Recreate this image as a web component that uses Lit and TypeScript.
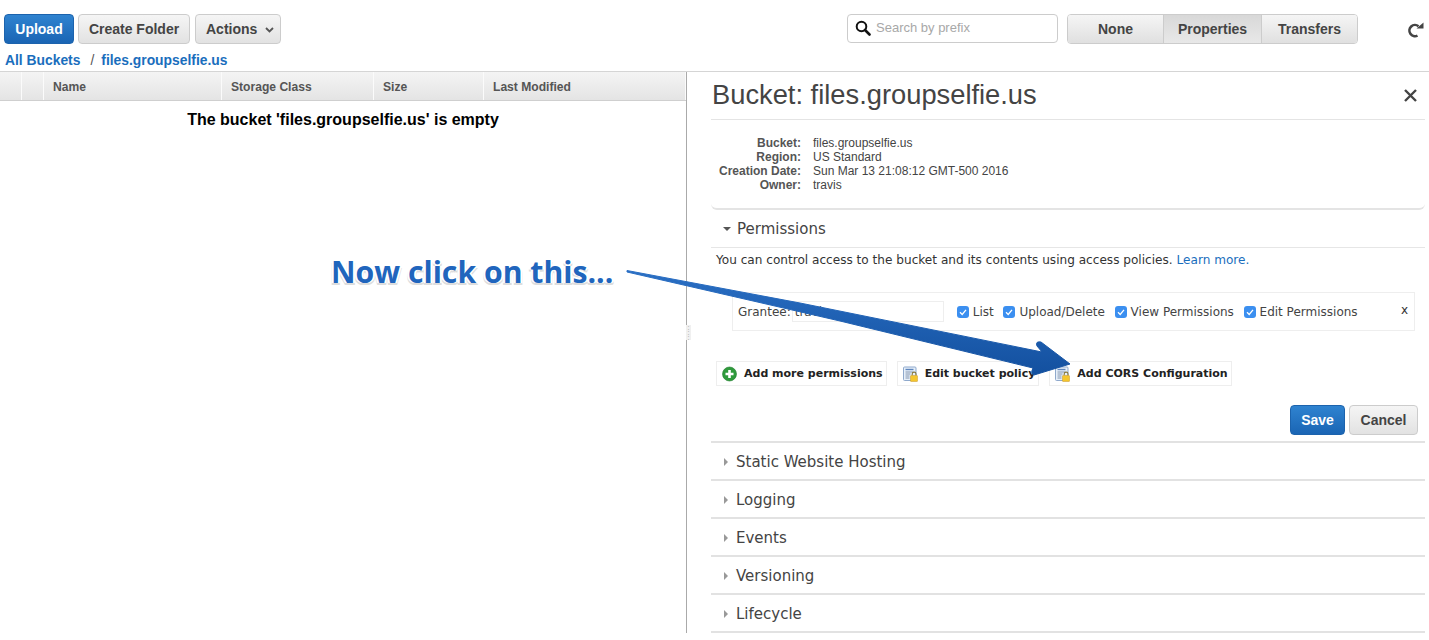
import { LitElement, css, html, svg } from 'lit'
import { customElement } from 'lit/decorators.js'

const sections = ['Static Website Hosting', 'Logging', 'Events', 'Versioning', 'Lifecycle']
const perms = ['List', 'Upload/Delete', 'View Permissions', 'Edit Permissions']
const columns = ['', '', 'Name', 'Storage Class', 'Size', 'Last Modified']
const details = [
  ['Bucket:', 'files.groupselfie.us'],
  ['Region:', 'US Standard'],
  ['Creation Date:', 'Sun Mar 13 21:08:12 GMT-500 2016'],
  ['Owner:', 'travis'],
]

const policyIcon = svg`<svg class="ico" width="16" height="16" viewBox="0 0 16 16">
  <rect x=".5" y="1" width="12.5" height="13.5" rx="1" fill="#e6eff9" stroke="#8fa9cc"/>
  <path d="M2.5 3.5h8" stroke="#5f86bd" stroke-width="1.4"/>
  <path d="M2.5 6h8M2.5 8h5M2.5 10h4M2.5 12h4" stroke="#8496b0" stroke-width="1"/>
  <path d="M9.2 9.5V8a1.9 1.9 0 0 1 3.8 0v1.5" fill="none" stroke="#8a7a3c" stroke-width="1.1"/>
  <rect x="7.5" y="9.5" width="7" height="6" rx=".6" fill="#f4c62e" stroke="#c9982a" stroke-width=".5"/>
</svg>`

const addIcon = svg`<svg class="ico" width="16" height="16" viewBox="0 0 16 16">
  <circle cx="7.5" cy="8" r="7" fill="#2f9a3c" stroke="#1f7d2c" stroke-width=".6"/>
  <path d="M7.5 4v8M3.5 8h8" stroke="#fff" stroke-width="2.6"/>
</svg>`

@customElement('app-root')
export class AppRoot extends LitElement {
  static override styles = css`
    :host {
      display: block;
      position: relative;
      width: 1429px;
      height: 640px;
      overflow: hidden;
      background: #fff;
      font-family: 'Liberation Sans', Arial, sans-serif;
      color: #444;
    }

    .top {
      height: 72px;
      box-sizing: border-box;
      border-bottom: 1px solid #d5d5d5;
      padding: 14px 0 0 4px;
    }

    .toolbar {
      display: flex;
      align-items: flex-start;
      height: 30px;
    }

    .btn {
      box-sizing: border-box;
      height: 30px;
      display: flex;
      align-items: center;
      justify-content: center;
      border: 1px solid #ccc;
      border-radius: 4px;
      background: linear-gradient(#f5f5f5, #e2e2e2);
      font-family: 'Liberation Sans', Arial, sans-serif;
      font-size: 14px;
      font-weight: 700;
      color: #444;
      margin-right: 5px;
    }

    .btn.primary {
      background: linear-gradient(#2f83d0, #1a65b4);
      border-color: #1c63ad;
      color: #fff;
    }

    .upload { width: 70px; margin-right: 4px; }
    .create { width: 112px; }
    .actions { width: 86px; gap: 8px; justify-content: flex-start; padding-left: 10px; }
    .actions svg { margin-top: 1px; }

    .search {
      box-sizing: border-box;
      width: 211px;
      height: 29px;
      margin-left: 561px;
      border: 1px solid #ccc;
      border-radius: 4px;
      display: flex;
      align-items: center;
      gap: 5px;
      padding: 0 0 2px 7px;
      font-size: 13px;
      color: #a8a8a8;
    }

    .tabs {
      display: flex;
      box-sizing: border-box;
      width: 291px;
      height: 30px;
      margin-left: 9px;
      border: 1px solid #ccc;
      border-radius: 4px;
      overflow: hidden;
    }

    .tab {
      display: flex;
      align-items: center;
      justify-content: center;
      background: linear-gradient(#f5f5f5, #e0e0e0);
      font-size: 14px;
      font-weight: 700;
      color: #444;
      box-sizing: border-box;
    }

    .tab + .tab { border-left: 1px solid #ccc; }
    .tab.none { width: 95px; }
    .tab.props { width: 98px; background: linear-gradient(#d8d8d8, #e8e8e8); }
    .tab.transfers { flex: 1; }

    .reload { margin-left: 49px; margin-top: 7px; }

    .crumbs {
      display: flex;
      margin-top: 8px;
      padding-left: 1px;
      font-size: 13.85px;
      line-height: 16px;
      font-weight: 700;
      color: #1a6ebd;
    }

    .crumbs .sep {
      font-weight: 400;
      color: #555;
      margin: 0 7px 0 10px;
    }

    .main {
      display: flex;
      height: 561px;
    }

    .left {
      box-sizing: border-box;
      width: 687px;
      border-right: 1px solid #aaa;
      height: 561px;
      flex: none;
    }

    .thead {
      display: grid;
      grid-template-columns: 22px 22px 178px 152px 110px 1fr;
      height: 29px;
      background: linear-gradient(#f4f4f4, #e4e4e4);
      border-bottom: 1px solid #cfcfcf;
      box-sizing: border-box;
    }

    .thead div {
      display: flex;
      align-items: center;
      padding: 2px 0 0 9px;
      border-right: 1px solid #fbfbfb;
      font-size: 12.1px;
      font-weight: 700;
      color: #555;
    }

    .empty {
      text-align: center;
      font-size: 16px;
      font-weight: 700;
      color: #000;
      margin-top: 10px;
      line-height: 18px;
    }

    .right {
      flex: 1;
      padding: 0 4px 0 24px;
      min-width: 0;
    }

    .title {
      box-sizing: border-box;
      display: flex;
      justify-content: space-between;
      align-items: center;
      height: 47px;
      font-size: 27.3px;
      color: #444;
      padding: 0 7px 2px 1px;
    }

    .title svg { margin-top: 2px; }

    .info {
      box-sizing: border-box;
      height: 91px;
      padding-top: 16px;
      border-top: 1px solid #e4e4e4;
      border-bottom: 2px solid #e4e4e4;
      border-radius: 0 0 6px 6px;
      display: grid;
      grid-template-columns: 90px 1fr;
      column-gap: 12px;
      font-size: 12px;
      line-height: 14px;
      align-content: start;
    }

    .info b { text-align: right; color: #555; }

    .section {
      font-family: 'DejaVu Sans', Verdana, sans-serif;
      font-size: 15px;
      color: #444;
      display: flex;
      align-items: center;
      gap: 8px;
      padding: 2px 0 0 13px;
      height: 34px;
      border-bottom: 2px solid #e2e2e2;
    }

    .section.perm-head {
      height: 37px;
      padding: 0 0 0 12px;
      gap: 6px;
      border-bottom: 1px solid #e6e6e6;
    }

    .arrow-r {
      width: 0;
      height: 0;
      border-left: 4px solid #999;
      border-top: 4px solid transparent;
      border-bottom: 4px solid transparent;
    }

    .arrow-d {
      width: 0;
      height: 0;
      border-top: 4px solid #555;
      border-left: 4px solid transparent;
      border-right: 4px solid transparent;
    }

    .perm-body {
      font-family: 'DejaVu Sans', Verdana, sans-serif;
      font-size: 12px;
      height: 195px;
      box-sizing: border-box;
      border-bottom: 2px solid #e2e2e2;
    }

    .intro {
      padding: 5px 0 0 5px;
      font-size: 12.1px;
      line-height: 15px;
      color: #333;
    }

    .intro span { color: #1a6ebd; }

    .grantee {
      box-sizing: border-box;
      height: 39px;
      margin: 24px 10px 0 21px;
      border: 1px solid #eee;
      display: flex;
      align-items: center;
      padding: 0 6px 0 5px;
    }

    .field {
      box-sizing: border-box;
      width: 152px;
      height: 21px;
      margin: 0 13px 0 1px;
      border: 1px solid #eee;
      display: flex;
      align-items: center;
      padding-left: 2px;
    }

    .perm {
      display: flex;
      align-items: center;
      gap: 4px;
      margin-right: 9.7px;
    }

    .check {
      width: 12px;
      height: 12px;
      border-radius: 3px;
      background: #3b8ff0;
      display: block;
    }

    .close-x {
      margin-left: auto;
      margin-top: -3px;
      font-size: 12px;
      color: #333;
    }

    .actions-row {
      display: flex;
      margin: 30px 0 0 5px;
      gap: 10px;
    }

    .link {
      box-sizing: border-box;
      height: 25px;
      display: flex;
      align-items: center;
      gap: 6px;
      padding: 0 3px 0 5px;
      border: 1px solid #eee;
      font-size: 11px;
      font-weight: 700;
      color: #222;
    }

    .ico { flex: none; }

    .save-row {
      display: flex;
      justify-content: flex-end;
      gap: 4px;
      margin-top: 19px;
      padding-right: 7px;
    }

    .save-row .btn { margin: 0; }
    .save { width: 55px; }
    .cancel { width: 69px; }

    .handle {
      position: absolute;
      left: 686px;
      top: 325px;
      width: 5px;
      height: 15px;
      background: #f0f0f0;
      color: #999;
      font-size: 7px;
      line-height: 5px;
      text-align: center;
    }

    .note {
      position: absolute;
      left: 331px;
      top: 250px;
      font-family: 'Open Sans', sans-serif;
      font-size: 30.2px;
      line-height: 43px;
      font-weight: 700;
      color: #2065bd;
      text-shadow: -2px 0 0 #fff, 2px 0 0 #fff, 0 -2px 0 #fff, 0 2px 0 #ddd, 2px 2px 0 #ddd, -2px 2px 0 #ddd;
      white-space: nowrap;
    }

    .pointer {
      position: absolute;
      left: 0;
      top: 0;
      pointer-events: none;
    }
  `

  override render() {
    return html`
      <div class="top">
        <div class="toolbar">
          <div class="btn primary upload">Upload</div>
          <div class="btn create">Create Folder</div>
          <div class="btn actions">
            Actions
            <svg width="9" height="6" viewBox="0 0 9 6"><path d="M1 1l3.5 3.5L8 1" fill="none" stroke="#555" stroke-width="1.8"/></svg>
          </div>
          <div class="search">
            <svg width="16" height="16" viewBox="0 0 16 16"><circle cx="6.5" cy="6.5" r="4.8" fill="none" stroke="#111" stroke-width="2"/><path d="M10 10l4.5 4.5" stroke="#111" stroke-width="2.6" stroke-linecap="round"/></svg>
            Search by prefix
          </div>
          <div class="tabs">
            <div class="tab none">None</div>
            <div class="tab props">Properties</div>
            <div class="tab transfers">Transfers</div>
          </div>
          <svg class="reload" width="17" height="17" viewBox="0 0 17 17">
            <path d="M11.5 5.2A5.6 5.6 0 1 0 10.5 14.6" fill="none" stroke="#444" stroke-width="2.6"/>
            <path d="M9.5 7.6H16.5V1.5z" fill="#444"/>
          </svg>
        </div>
        <div class="crumbs">All Buckets<span class="sep">/</span>files.groupselfie.us</div>
      </div>
      <div class="main">
        <div class="left">
          <div class="thead">${columns.map((c) => html`<div>${c}</div>`)}</div>
          <div class="empty">The bucket 'files.groupselfie.us' is empty</div>
        </div>
        <div class="right">
          <div class="title">
            Bucket: files.groupselfie.us
            <svg width="15" height="15" viewBox="0 0 15 15"><path d="M2 2l11 11M13 2L2 13" stroke="#444" stroke-width="2.4"/></svg>
          </div>
          <div class="info">
            ${details.map(([k, v]) => html`<b>${k}</b><span>${v}</span>`)}
          </div>
          <div class="section perm-head"><i class="arrow-d"></i>Permissions</div>
          <div class="perm-body">
            <div class="intro">You can control access to the bucket and its contents using access policies. <span>Learn more.</span></div>
            <div class="grantee">
              Grantee:
              <div class="field">travis</div>
              ${perms.map(
                (p) => html`<label class="perm">
                  <svg class="check" viewBox="0 0 12 12"><path d="M3 6.2l2.2 2.3L9 3.8" fill="none" stroke="#fff" stroke-width="1.3"/></svg>
                  ${p}
                </label>`,
              )}
              <span class="close-x">x</span>
            </div>
            <div class="actions-row">
              <div class="link">${addIcon}<span>Add more permissions</span></div>
              <div class="link">${policyIcon}<span>Edit bucket policy</span></div>
              <div class="link">${policyIcon}<span>Add CORS Configuration</span></div>
            </div>
            <div class="save-row">
              <div class="btn primary save">Save</div>
              <div class="btn cancel">Cancel</div>
            </div>
          </div>
          ${sections.map((s) => html`<div class="section"><i class="arrow-r"></i>${s}</div>`)}
        </div>
      </div>
      <div class="handle">:<br />:<br />:</div>
      <div class="note">Now click on this...</div>
      <svg class="pointer" width="1429" height="640" viewBox="0 0 1429 640">
        <defs>
          <linearGradient id="shaft" x1="0" y1="0" x2="0" y2="1">
            <stop offset="0" stop-color="#2a6fc4" />
            <stop offset="1" stop-color="#13509f" />
          </linearGradient>
        </defs>
        <path
          d="M627 270.5 L800 303 L1042 352 L1037 346 Q1035 341 1041 342 L1070 364 L1034 375 Q1030 374 1033 368 L840 321 L627 272 Z"
          fill="url(#shaft)"
          stroke="url(#shaft)"
          stroke-width="1"
          stroke-linejoin="round"
        />
      </svg>
    `
  }
}

declare global {
  interface HTMLElementTagNameMap {
    'app-root': AppRoot
  }
}
